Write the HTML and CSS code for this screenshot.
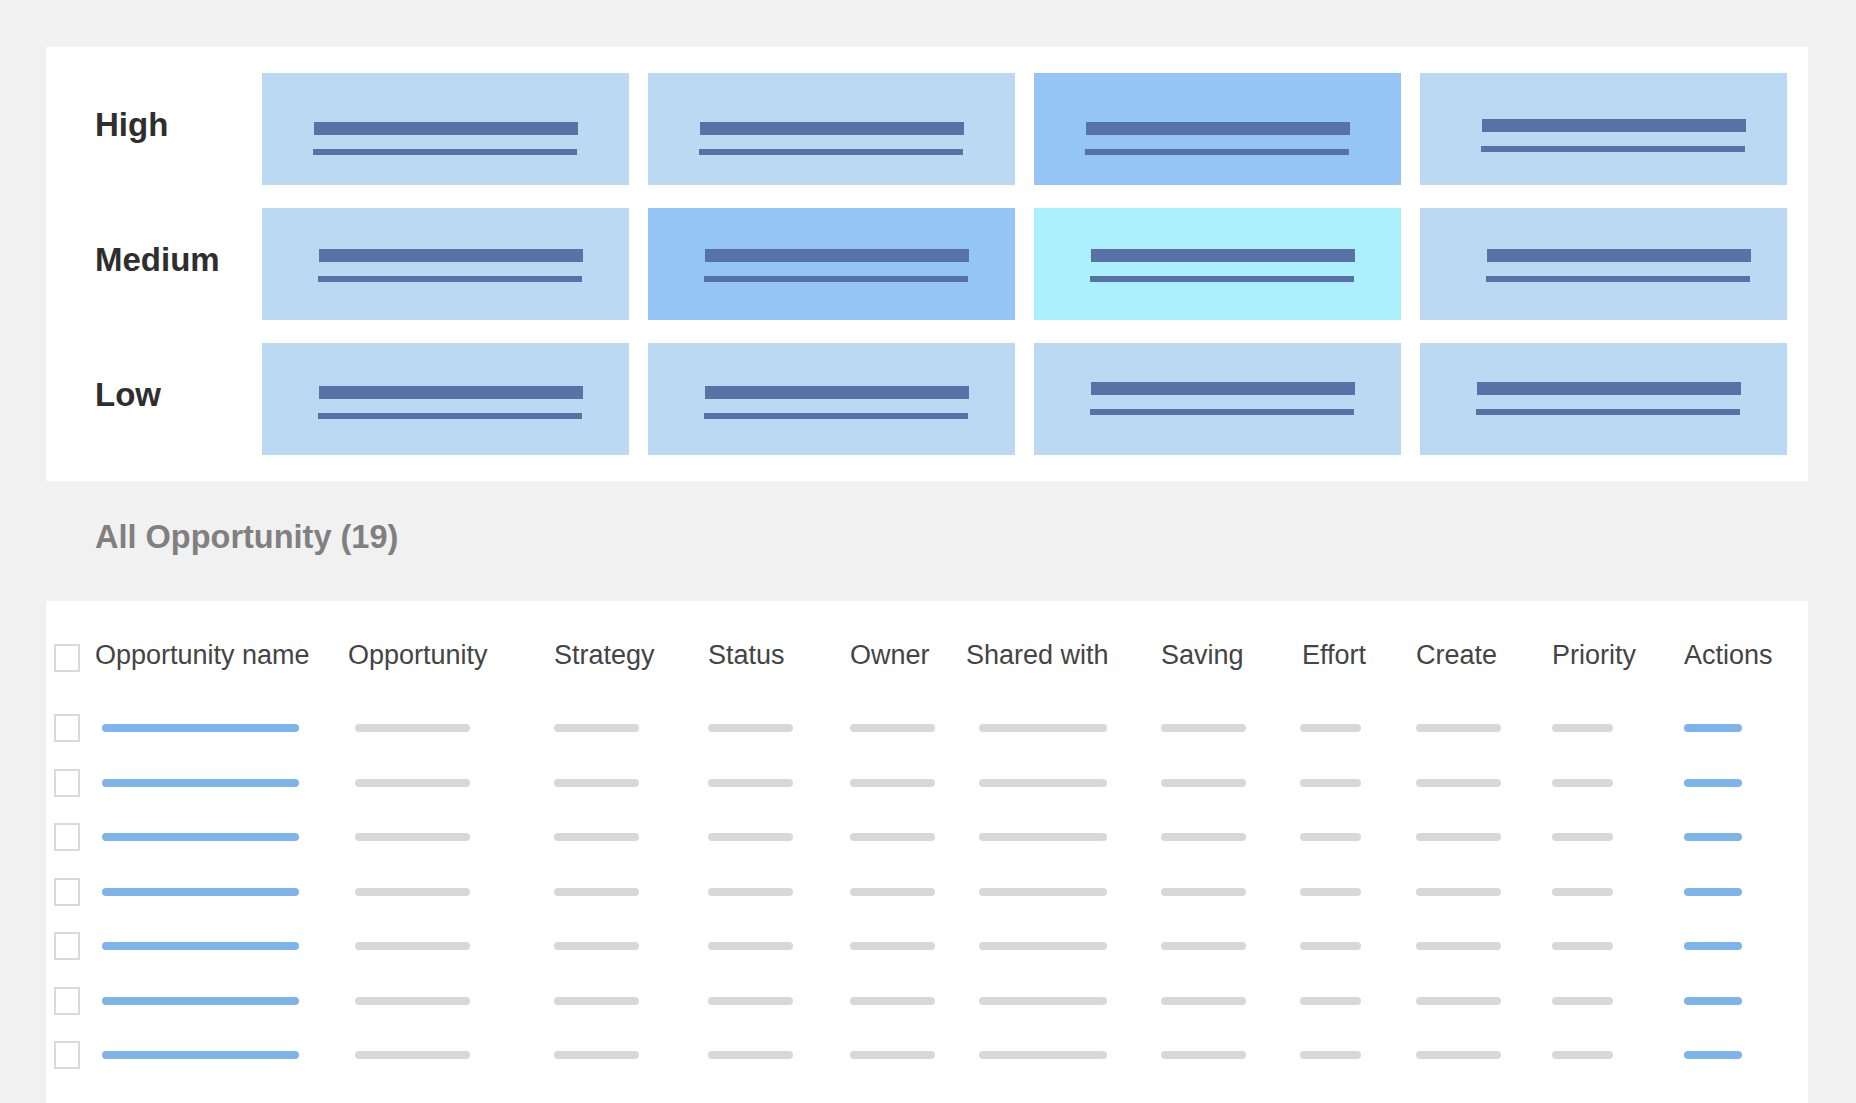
FILE: index.html
```html
<!DOCTYPE html>
<html lang="en">
<head>
  <meta charset="UTF-8">
  <meta name="viewport" content="width=device-width, initial-scale=1.0">
  <title>Opportunities</title>
  <link rel="stylesheet" href="styles.css">
</head>
<body>
  <!-- Priority / effort matrix -->
  <section class="panel matrix">
    <div class="matrix-row row-high">
      <div class="level">High</div>
      <div class="cell"><span class="line-thick"></span><span class="line-thin"></span></div>
      <div class="cell"><span class="line-thick"></span><span class="line-thin"></span></div>
      <div class="cell mid"><span class="line-thick"></span><span class="line-thin"></span></div>
      <div class="cell nudge raised"><span class="line-thick"></span><span class="line-thin"></span></div>
    </div>
    <div class="matrix-row row-medium">
      <div class="level">Medium</div>
      <div class="cell"><span class="line-thick"></span><span class="line-thin"></span></div>
      <div class="cell mid"><span class="line-thick"></span><span class="line-thin"></span></div>
      <div class="cell cyan"><span class="line-thick"></span><span class="line-thin"></span></div>
      <div class="cell nudge-more"><span class="line-thick"></span><span class="line-thin"></span></div>
    </div>
    <div class="matrix-row row-low">
      <div class="level">Low</div>
      <div class="cell"><span class="line-thick"></span><span class="line-thin"></span></div>
      <div class="cell"><span class="line-thick"></span><span class="line-thin"></span></div>
      <div class="cell raised"><span class="line-thick"></span><span class="line-thin"></span></div>
      <div class="cell raised"><span class="line-thick"></span><span class="line-thin"></span></div>
    </div>
  </section>

  <h2 class="section-title">All Opportunity (19)</h2>

  <!-- Opportunity list -->
  <section class="panel list">
    <div class="list-head">
      <span class="check"></span>
      <span>Opportunity name</span>
      <span>Opportunity</span>
      <span>Strategy</span>
      <span>Status</span>
      <span>Owner</span>
      <span>Shared with</span>
      <span>Saving</span>
      <span>Effort</span>
      <span>Create</span>
      <span>Priority</span>
      <span>Actions</span>
    </div>

    <div class="list-row">
      <span class="check"></span>
      <span class="bar bar-name"></span>
      <span class="bar bar-opp"></span>
      <span class="bar bar-md"></span>
      <span class="bar bar-md"></span>
      <span class="bar bar-md"></span>
      <span class="bar bar-shared"></span>
      <span class="bar bar-md"></span>
      <span class="bar bar-effort"></span>
      <span class="bar bar-md"></span>
      <span class="bar bar-sm"></span>
      <span class="bar bar-action"></span>
    </div>
    <div class="list-row">
      <span class="check"></span>
      <span class="bar bar-name"></span>
      <span class="bar bar-opp"></span>
      <span class="bar bar-md"></span>
      <span class="bar bar-md"></span>
      <span class="bar bar-md"></span>
      <span class="bar bar-shared"></span>
      <span class="bar bar-md"></span>
      <span class="bar bar-effort"></span>
      <span class="bar bar-md"></span>
      <span class="bar bar-sm"></span>
      <span class="bar bar-action"></span>
    </div>
    <div class="list-row">
      <span class="check"></span>
      <span class="bar bar-name"></span>
      <span class="bar bar-opp"></span>
      <span class="bar bar-md"></span>
      <span class="bar bar-md"></span>
      <span class="bar bar-md"></span>
      <span class="bar bar-shared"></span>
      <span class="bar bar-md"></span>
      <span class="bar bar-effort"></span>
      <span class="bar bar-md"></span>
      <span class="bar bar-sm"></span>
      <span class="bar bar-action"></span>
    </div>
    <div class="list-row">
      <span class="check"></span>
      <span class="bar bar-name"></span>
      <span class="bar bar-opp"></span>
      <span class="bar bar-md"></span>
      <span class="bar bar-md"></span>
      <span class="bar bar-md"></span>
      <span class="bar bar-shared"></span>
      <span class="bar bar-md"></span>
      <span class="bar bar-effort"></span>
      <span class="bar bar-md"></span>
      <span class="bar bar-sm"></span>
      <span class="bar bar-action"></span>
    </div>
    <div class="list-row">
      <span class="check"></span>
      <span class="bar bar-name"></span>
      <span class="bar bar-opp"></span>
      <span class="bar bar-md"></span>
      <span class="bar bar-md"></span>
      <span class="bar bar-md"></span>
      <span class="bar bar-shared"></span>
      <span class="bar bar-md"></span>
      <span class="bar bar-effort"></span>
      <span class="bar bar-md"></span>
      <span class="bar bar-sm"></span>
      <span class="bar bar-action"></span>
    </div>
    <div class="list-row">
      <span class="check"></span>
      <span class="bar bar-name"></span>
      <span class="bar bar-opp"></span>
      <span class="bar bar-md"></span>
      <span class="bar bar-md"></span>
      <span class="bar bar-md"></span>
      <span class="bar bar-shared"></span>
      <span class="bar bar-md"></span>
      <span class="bar bar-effort"></span>
      <span class="bar bar-md"></span>
      <span class="bar bar-sm"></span>
      <span class="bar bar-action"></span>
    </div>
    <div class="list-row">
      <span class="check"></span>
      <span class="bar bar-name"></span>
      <span class="bar bar-opp"></span>
      <span class="bar bar-md"></span>
      <span class="bar bar-md"></span>
      <span class="bar bar-md"></span>
      <span class="bar bar-shared"></span>
      <span class="bar bar-md"></span>
      <span class="bar bar-effort"></span>
      <span class="bar bar-md"></span>
      <span class="bar bar-sm"></span>
      <span class="bar bar-action"></span>
    </div>
  </section>
</body>
</html>
```

FILE: styles.css
```css
body {
  margin: 0;
  background-color: #f1f1f1;
  font-family: "Liberation Sans", Arial, Helvetica, sans-serif;
  color: #333;
}

.panel {
  background-color: #fff;
  margin-left: 46px;
  width: 1762px;
  box-sizing: border-box;
}

/* Matrix */
.matrix {
  margin-top: 47px;
  padding: 26px 21px 26px 49px;
  display: flex;
  flex-direction: column;
  gap: 23px;
}

.matrix-row {
  display: grid;
  grid-template-columns: 148px repeat(4, 1fr);
  column-gap: 19px;
  height: 112px;
}

.level {
  display: flex;
  align-items: center;
  padding-bottom: 9px;
  font-size: 33px;
  font-weight: bold;
  color: #2e2e2e;
}

.cell {
  display: flex;
  flex-direction: column;
  align-items: center;
  padding-left: 10px;
  background-color: #bcd9f4;
}

.cell.mid {
  background-color: #94c5f4;
}

.cell.cyan {
  background-color: #acf0fe;
}

.row-high .cell {
  padding-top: 49px;
  padding-left: 0;
}

.row-medium .cell {
  padding-top: 41px;
}

.row-low .cell {
  padding-top: 43px;
}

.row-high .cell.nudge {
  padding-left: 20px;
}

.cell.nudge-more {
  padding-left: 30px;
}

.row-high .cell.raised {
  padding-top: 46px;
}

.row-low .cell.raised {
  padding-top: 39px;
}

.line-thick {
  width: 264px;
  height: 13px;
  margin-bottom: 14px;
  background-color: #5972a6;
}

.line-thin {
  width: 264px;
  height: 6px;
  margin-right: 2px;
  background-color: #5972a6;
}

/* List */
.section-title {
  margin: 38px 0 46px 95px;
  font-size: 32.5px;
  line-height: 36px;
  font-weight: bold;
  color: #808080;
}

.list {
  padding: 28px 0 60px 8px;
}

.list-head, .list-row {
  display: grid;
  grid-template-columns: 41px 253px 206px 154px 142px 116px 195px 141px 114px 136px 132px auto;
  align-items: center;
}

.list-head {
  height: 58px;
  margin-bottom: 14px;
  font-size: 27px;
  color: #444;
}

.list-head span {
  padding-bottom: 6px;
}

.list-head .check {
  padding-bottom: 0;
}

.list-row {
  height: 54.5px;
}

.check {
  width: 26px;
  height: 28px;
  box-sizing: border-box;
  border: 2px solid #dadada;
  background-color: #fff;
}

.bar {
  height: 8px;
  border-radius: 4px;
  background-color: #d8d8d8;
}

.bar-name {
  width: 197px;
  margin-left: 7px;
  background-color: #7db4ea;
}

.bar-opp {
  width: 115px;
  margin-left: 7px;
}

.bar-md {
  width: 85px;
}

.bar-shared {
  width: 128px;
  margin-left: 13px;
}

.bar-effort {
  width: 61px;
  margin-left: -2px;
}

.bar-sm {
  width: 61px;
}

.bar-action {
  width: 58px;
  background-color: #7db4ea;
}
```
